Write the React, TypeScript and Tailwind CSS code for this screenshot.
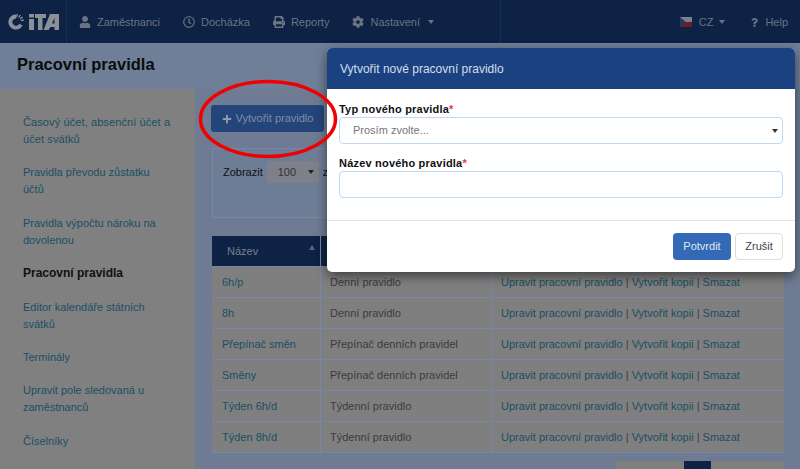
import type { ReactNode } from "react";
import { FaUser, FaRegClock, FaPrint, FaCog, FaPlus, FaQuestion } from "react-icons/fa";

const sideLinks = [
  { label: "Časový účet, absenční účet a\núčet svátků", className: "tracking-[0.1px]" },
  { label: "Pravidla převodu zůstatku\núčtů" },
  { label: "Pravidla výpočtu nároku na\ndovolenou" },
  { label: "Pracovní pravidla", className: "text-[12px] font-bold text-[#111]" },
  { label: "Editor kalendáře státních\nsvátků" },
  { label: "Terminály" },
  { label: "Upravit pole sledovaná u\nzaměstnanců" },
  { label: "Číselníky" },
];

const rows = [
  ["6h/p", "Denní pravidlo"],
  ["8h", "Denní pravidlo"],
  ["Přepínač směn", "Přepínač denních pravidel"],
  ["Směny", "Přepínač denních pravidel"],
  ["Týden 6h/d", "Týdenní pravidlo"],
  ["Týden 8h/d", "Týdenní pravidlo"],
];

const Caret = ({ className }: { className: string }) => (
  <span className={`inline-block h-0 w-0 border-x-[3.5px] border-t-[4px] border-x-transparent ${className}`} />
);

const Logo = () => (
  <svg width="52" height="18" viewBox="0 0 52 18" className="text-[#8b8f96]">
    <circle cx="8" cy="9" r="5.6" fill="none" stroke="currentColor" strokeWidth="4" pathLength={100} strokeDasharray="68 32" transform="rotate(28 8 9)" />
    <circle cx="8" cy="9" r="6.6" fill="none" stroke="currentColor" strokeWidth="3" pathLength={100} strokeDasharray="3 3 3 3 3 3 3 100" transform="rotate(-85 8 9)" />
    <rect x="21" y="6" width="5" height="11" fill="currentColor" />
    <rect x="21" y="1" width="5" height="3.500" fill="currentColor" />
    <path d="M27 1h11v4h-3.500v12h-4.500V5H27z" fill="currentColor" />
    <path d="M42 1h9v16h-4.500v-3h-4l-2 3H35.500zM46.500 5l-2.500 5.500h2.500z" fill="currentColor" fillRule="evenodd" />
  </svg>
);

const NavItem = ({ icon, label, caret }: { icon: ReactNode; label: string; caret?: boolean }) => (
  <div className="flex items-center gap-[6px]">
    {icon}
    <span>{label}</span>
    {caret && <Caret className="ml-[2px] border-t-[#6b7483]" />}
  </div>
);

export default function App() {
  return (
    <div className="relative h-[469px] w-[800px] overflow-hidden bg-[#6e7b92] font-['Liberation_Sans',sans-serif] text-[11px]">
      <header className="flex h-[43px] items-center bg-[#0d2244] pt-[1px] text-[#6b7483]">
        <div className="flex h-full w-[67px] items-center border-r border-[#14305c] pl-[8px]">
          <Logo />
        </div>
        <nav className="flex h-full w-[434px] items-center gap-[23px] border-r border-[#14305c] pl-[12px]">
          <NavItem icon={<FaUser size={12} />} label="Zaměstnanci" />
          <NavItem icon={<FaRegClock size={12} />} label="Docházka" />
          <NavItem icon={<FaPrint size={12} />} label="Reporty" />
          <NavItem icon={<FaCog size={12} />} label="Nastavení" caret />
        </nav>
        <div className="ml-auto flex items-center gap-[25px] pr-[12px]">
          <div className="flex items-center gap-[7px]">
            <svg width="12" height="10" viewBox="0 0 12 10">
              <rect width="12" height="5" fill="#7d8088" />
              <rect y="5" width="12" height="5" fill="#6c1f22" />
              <path d="M0 0l6 5-6 5z" fill="#1f3a66" />
            </svg>
            <span>CZ</span>
            <Caret className="ml-[-1px] border-t-[#6b7483]" />
          </div>
          <div className="flex items-center gap-[6px]">
            <FaQuestion size={9} />
            <span>Help</span>
          </div>
        </div>
      </header>

      <div className="flex h-[46px] items-center bg-[#6f7f98] pb-[4px] pl-[17px] text-[16.5px] font-bold text-[#0b0b0b]">
        Pracovní pravidla
      </div>

      <div className="flex">
        <aside className="flex h-[380px] w-[195px] shrink-0 flex-col gap-[16.4px] whitespace-pre-line bg-[#808080] pl-[23px] pt-[25px] leading-[17px] text-[#1a4f63]">
          {sideLinks.map((link) => (
            <div key={link.label} className={link.className}>
              {link.label}
            </div>
          ))}
        </aside>

        <main className="flex-1 pl-[16px] pt-[16px]">
          <button className="flex h-[27px] w-[113px] items-center justify-center gap-[4px] rounded-[3px] bg-[#24457a] text-[#7f8da6]">
            <FaPlus size={10} className="text-[#8f9bb0]" />
            Vytvořit pravidlo
          </button>

          <div className="ml-[1px] mt-[16px] flex h-[70px] w-[572px] items-start gap-[4px] border border-[#7489aa] bg-[#6e7d96] pl-[10px] pt-[12px] text-[#101010]">
            <span className="mt-[3px]">Zobrazit</span>
            <div className="flex h-[22px] w-[52px] items-center justify-between rounded-[3px] bg-[#7d8088] pl-[11px] pr-[5px] text-[#333]">
              100
              <Caret className="border-t-[#222]" />
            </div>
            <span className="mt-[3px]">z</span>
          </div>

          <table className="ml-[1px] mt-[18px] w-[572px] table-fixed border-separate border-spacing-0 text-[#3c3c3c]">
            <thead>
              <tr className="h-[31px] text-[#76808f]">
                <th className="relative w-[108px] border-b border-[#7588a8] bg-[#0d2244] pl-[15px] text-left font-normal">
                  Název
                  <span className="absolute right-[5px] top-[9px] h-0 w-0 border-x-[3px] border-b-[5px] border-x-transparent border-b-[#5a5f9c]" />
                </th>
                <th className="w-[171px] border-b border-l border-[#7588a8] bg-[#0d2244]" />
                <th className="border-b border-l border-[#7588a8] bg-[#0d2244]" />
              </tr>
            </thead>
            <tbody>
              {rows.map(([name, type]) => (
                <tr key={name} className="h-[31px] bg-[#7f7f7f]">
                  <td className="border-b border-[#7588a8] pl-[10px] text-[#1a4f63]">{name}</td>
                  <td className="border-b border-l border-[#7588a8] pl-[9px]">{type}</td>
                  <td className="border-b border-l border-[#7588a8] pl-[9px] text-[#1a4f63]">
                    Upravit pracovní pravidlo <span className="text-[#3c3c3c]">|</span> Vytvořit kopii{" "}
                    <span className="text-[#3c3c3c]">|</span> Smazat
                  </td>
                </tr>
              ))}
            </tbody>
          </table>

          <div className="ml-[405px] mt-[8px] flex h-[20px] w-[168px] rounded-t-[3px] bg-[#7f7f7f]">
            <div className="ml-[68px] h-full w-[27px] bg-[#0d2244]" />
          </div>
        </main>
      </div>

      <div className="absolute left-[327px] top-[48px] w-[468px] overflow-hidden rounded-[5px] bg-white shadow-[0_4px_12px_rgba(0,0,0,0.5)]">
        <div className="flex h-[41px] items-center bg-[#1a4280] pl-[13px] text-[12px] text-[#d5deec]">
          Vytvořit nové pracovní pravidlo
        </div>
        <div className="h-[132px] border-b border-[#e5e5e5] px-[12px] pt-[13px]">
          <label className="block text-[11px] font-bold leading-[14px] tracking-[0.2px] text-[#111]">
            Typ nového pravidla<span className="text-[#e33]">*</span>
          </label>
          <div className="mt-[1px] flex h-[27px] items-center justify-between rounded-[4px] border border-[#c0d8f2] pl-[13px] pr-[4px] text-[#777]">
            Prosím zvolte...
            <Caret className="border-t-[#333]" />
          </div>
          <label className="mt-[12px] block text-[11px] font-bold leading-[14px] tracking-[0.2px] text-[#111]">
            Název nového pravidla<span className="text-[#e33]">*</span>
          </label>
          <div className="mt-[1px] h-[27px] rounded-[4px] border border-[#c0d8f2]" />
        </div>
        <div className="flex h-[51px] items-center justify-end gap-[4px] pr-[12px]">
          <button className="h-[27px] w-[58px] rounded-[4px] bg-[#3369b5] text-[#dfe8f4]">Potvrdit</button>
          <button className="h-[27px] w-[48px] rounded-[4px] border border-[#ddd] text-[#444]">Zrušit</button>
        </div>
      </div>

      <svg className="absolute left-0 top-0" width="800" height="469">
        <ellipse cx="268" cy="119" rx="67.500" ry="37.500" fill="none" stroke="#f00000" strokeWidth="3.500" />
      </svg>
    </div>
  );
}
